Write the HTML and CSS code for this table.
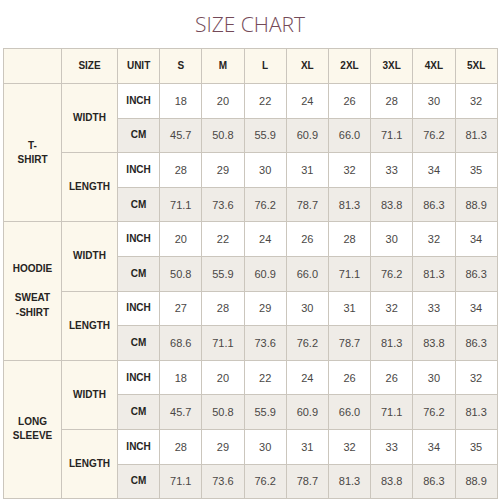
FILE: index.html
```html
<!DOCTYPE html>
<html>
<head>
<meta charset="utf-8">
<link rel="stylesheet" href="styles.css">
</head>
<body>
<div class="page">
  <h1 class="title">SIZE CHART</h1>
  <table class="chart">
    <colgroup>
      <col class="c-garment"><col class="c-measure"><col class="c-unit">
      <col span="8" class="c-size">
    </colgroup>
    <thead>
      <tr class="head">
        <th class="cream"></th><th class="cream">SIZE</th><th class="cream">UNIT</th>
        <th class="cream">S</th><th class="cream">M</th><th class="cream">L</th><th class="cream">XL</th>
        <th class="cream">2XL</th><th class="cream">3XL</th><th class="cream">4XL</th><th class="cream">5XL</th>
      </tr>
    </thead>
    <tbody>
      <tr class="inch">
        <th rowspan="4" class="cream lbl">T-<br>SHIRT</th>
        <th rowspan="2" class="cream">WIDTH</th>
        <th>INCH</th><td>18</td><td>20</td><td>22</td><td>24</td><td>26</td><td>28</td><td>30</td><td>32</td>
      </tr>
      <tr class="cm">
        <th>CM</th><td>45.7</td><td>50.8</td><td>55.9</td><td>60.9</td><td>66.0</td><td>71.1</td><td>76.2</td><td>81.3</td>
      </tr>
      <tr class="inch">
        <th rowspan="2" class="cream">LENGTH</th>
        <th>INCH</th><td>28</td><td>29</td><td>30</td><td>31</td><td>32</td><td>33</td><td>34</td><td>35</td>
      </tr>
      <tr class="cm">
        <th>CM</th><td>71.1</td><td>73.6</td><td>76.2</td><td>78.7</td><td>81.3</td><td>83.8</td><td>86.3</td><td>88.9</td>
      </tr>

      <tr class="inch">
        <th rowspan="4" class="cream lbl tight">HOODIE<br><br>SWEAT<br>-SHIRT</th>
        <th rowspan="2" class="cream">WIDTH</th>
        <th>INCH</th><td>20</td><td>22</td><td>24</td><td>26</td><td>28</td><td>30</td><td>32</td><td>34</td>
      </tr>
      <tr class="cm">
        <th>CM</th><td>50.8</td><td>55.9</td><td>60.9</td><td>66.0</td><td>71.1</td><td>76.2</td><td>81.3</td><td>86.3</td>
      </tr>
      <tr class="inch">
        <th rowspan="2" class="cream">LENGTH</th>
        <th>INCH</th><td>27</td><td>28</td><td>29</td><td>30</td><td>31</td><td>32</td><td>33</td><td>34</td>
      </tr>
      <tr class="cm">
        <th>CM</th><td>68.6</td><td>71.1</td><td>73.6</td><td>76.2</td><td>78.7</td><td>81.3</td><td>83.8</td><td>86.3</td>
      </tr>

      <tr class="inch">
        <th rowspan="4" class="cream lbl">LONG<br>SLEEVE</th>
        <th rowspan="2" class="cream">WIDTH</th>
        <th>INCH</th><td>18</td><td>20</td><td>22</td><td>24</td><td>26</td><td>26</td><td>30</td><td>32</td>
      </tr>
      <tr class="cm">
        <th>CM</th><td>45.7</td><td>50.8</td><td>55.9</td><td>60.9</td><td>66.0</td><td>71.1</td><td>76.2</td><td>81.3</td>
      </tr>
      <tr class="inch">
        <th rowspan="2" class="cream">LENGTH</th>
        <th>INCH</th><td>28</td><td>29</td><td>30</td><td>31</td><td>32</td><td>33</td><td>34</td><td>35</td>
      </tr>
      <tr class="cm">
        <th>CM</th><td>71.1</td><td>73.6</td><td>76.2</td><td>78.7</td><td>81.3</td><td>83.8</td><td>86.3</td><td>88.9</td>
      </tr>
    </tbody>
  </table>
</div>
</body>
</html>
```
FILE: styles.css
```css
html, body {
  margin: 0;
  padding: 0;
  background: #ffffff;
}

.page {
  width: 500px;
  height: 500px;
  overflow: hidden;
  padding: 0 3px;
  box-sizing: border-box;
  font-family: "Liberation Sans", Arial, sans-serif;
}

.title {
  margin: 0;
  height: 48px;
  display: flex;
  align-items: center;
  justify-content: center;
  font-family: "Open Sans", "Liberation Sans", sans-serif;
  font-weight: 300;
  font-size: 21px;
  letter-spacing: 0;
  color: #744a58;
}

.chart {
  width: 494px;
  border-collapse: collapse;
  table-layout: fixed;
}

.c-garment { width: 58px; }
.c-measure { width: 56px; }
.c-unit, .c-size { width: 42.2px; }

.chart th, .chart td {
  border: 1px solid #cbc6bd;
  text-align: center;
  vertical-align: middle;
  padding: 0;
  line-height: 14px;
}

.chart th {
  font-size: 10px;
  font-weight: 700;
  color: #262422;
}

.chart td {
  font-size: 11px;
  font-weight: 400;
  color: #4a4745;
}

.head th {
  height: 34px;
  background: #fcf8ec;
}

.chart tbody tr {
  height: 34.6px;
}

.inch th, .inch td {
  background: #ffffff;
}

.cm th, .cm td {
  background: #efece7;
}

.chart th.cream {
  background: #fcf8ec;
}

.lbl {
  line-height: 15px;
}

.lbl.tight {
  line-height: 14.5px;
}
```
